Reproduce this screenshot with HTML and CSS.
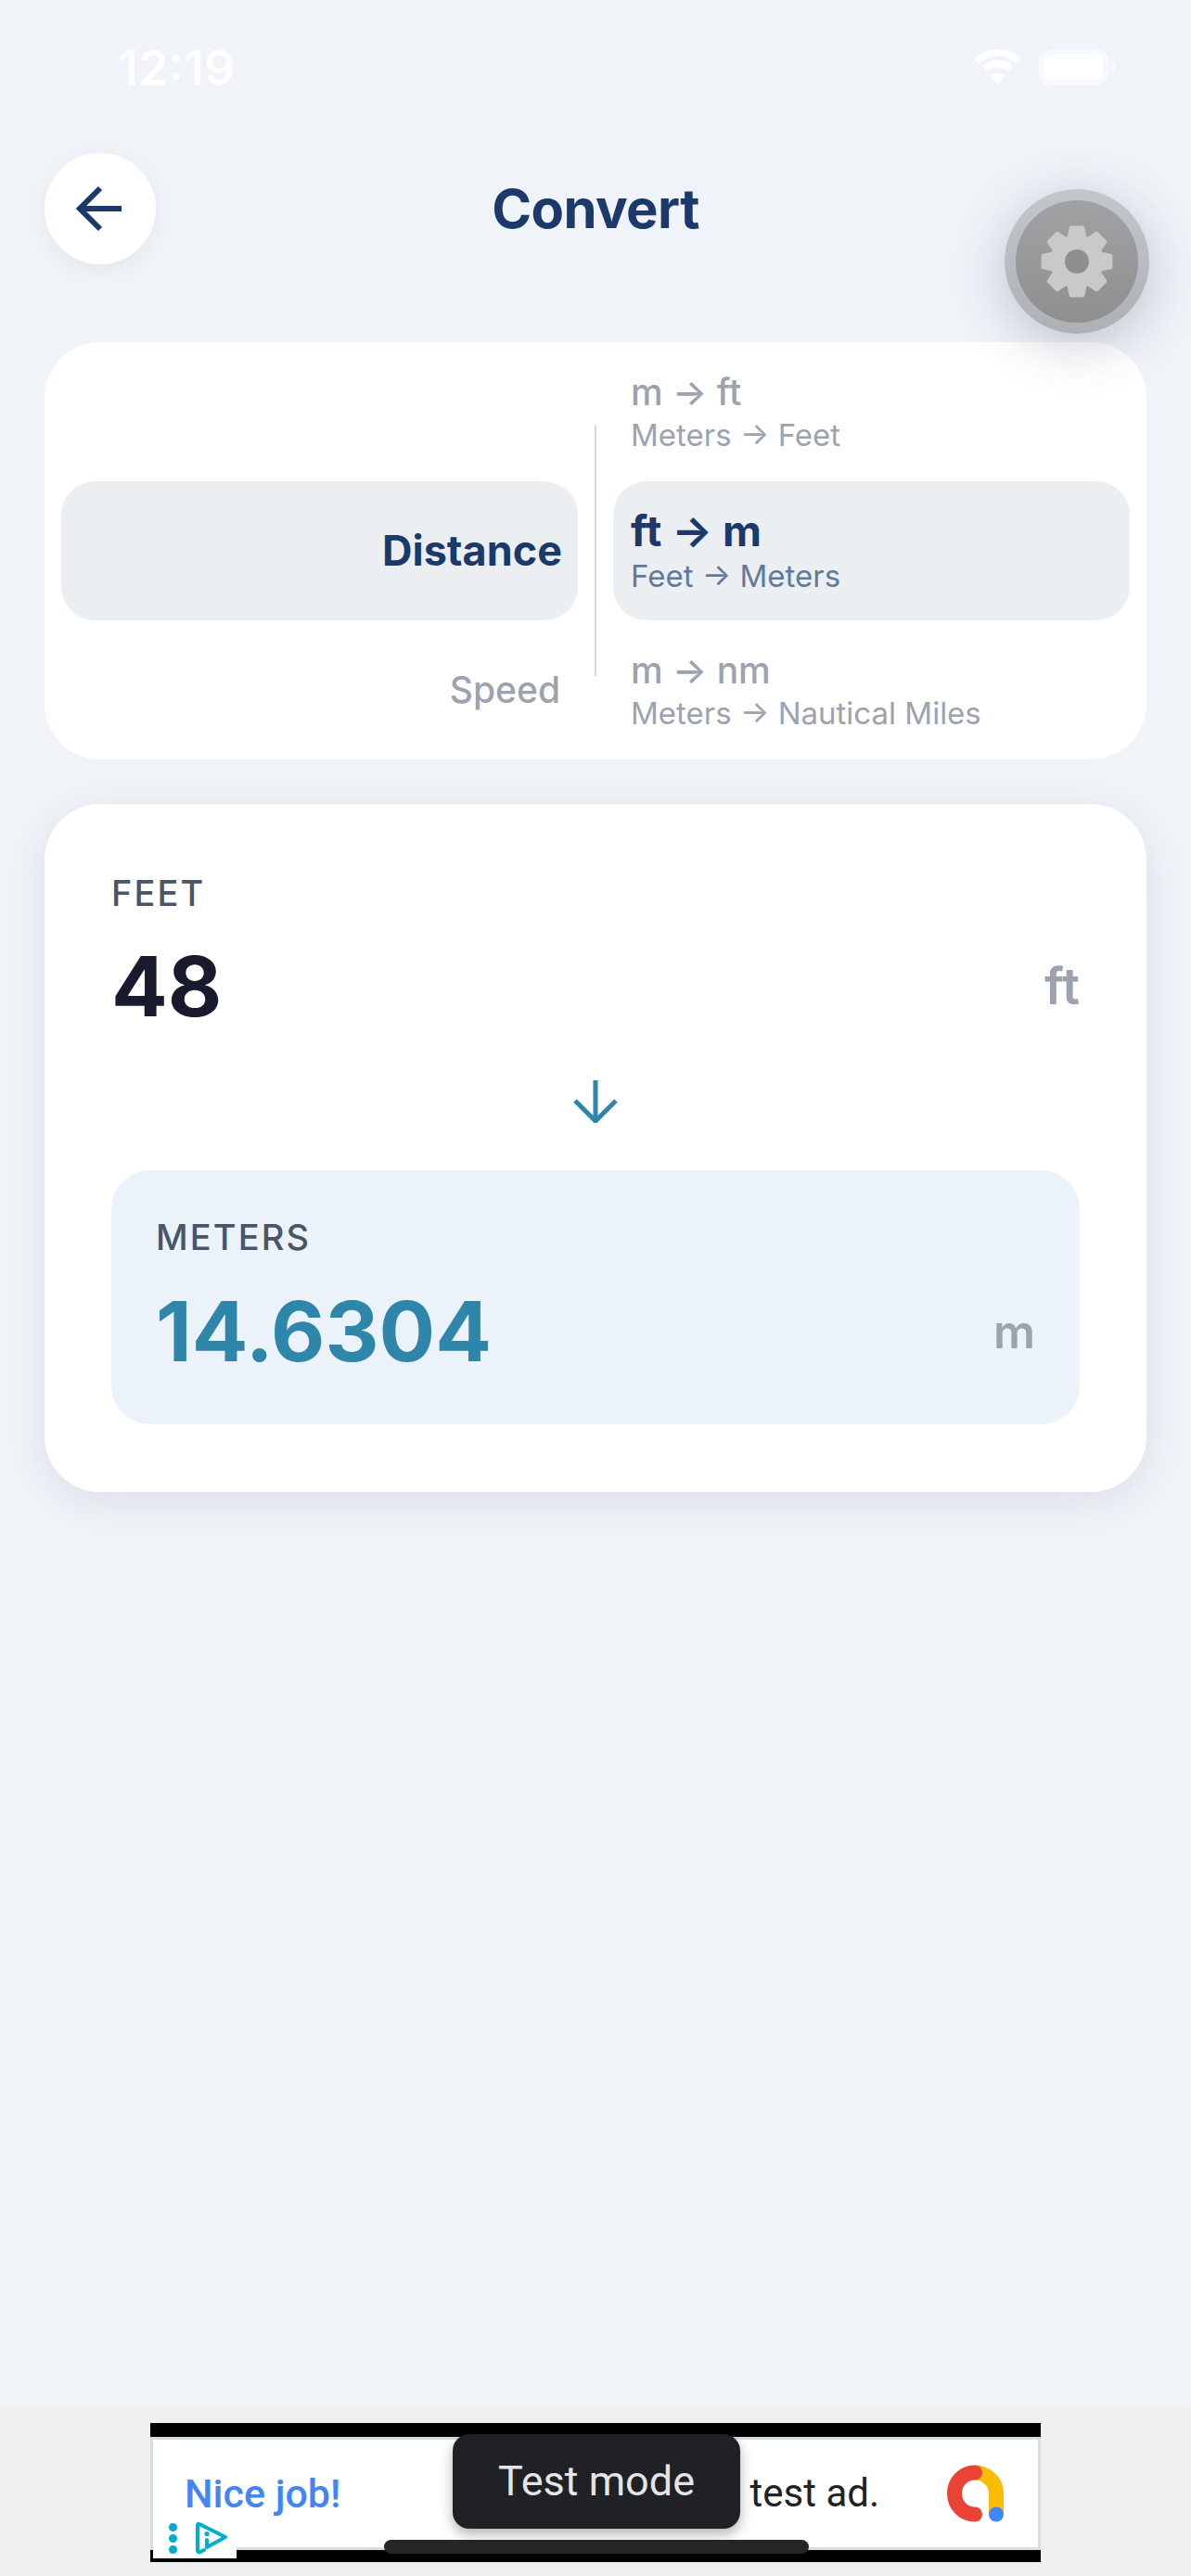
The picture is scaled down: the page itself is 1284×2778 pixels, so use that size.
FILE: index.html
```html
<!DOCTYPE html>
<html lang="en">
<head>
<meta charset="utf-8">
<title>Convert</title>
<link rel="stylesheet" href="styles.css">
</head>
<body>
<div class="screen">
  <div class="status">
    <span class="clock">12:19</span>
    <div class="status-icons">
      <div class="signal"><i></i><i></i><i></i><i></i></div>
      <svg class="wifi" viewBox="0 0 51 38" width="51" height="38"><path d="M25.5 0C35 0 44 4 51 10.5L46 16C40 10.5 33 7.5 25.5 7.5C18 7.5 11 10.5 5 16L0 10.5C7 4 16 0 25.5 0Z"/><path d="M25.5 11.5C32 11.5 38 14 42 18L37.5 24C34.5 21 30 20 25.5 20C21 20 16.5 21 13.5 24L9 18C13 14 19 11.5 25.5 11.5Z"/><path d="M25.5 26C29 26 31 27 33.5 29L25.5 38L17.5 29C20 27 22 26 25.5 26Z"/></svg>
      <div class="battery"><div class="battery-fill"></div></div>
      <div class="battery-nub"></div>
    </div>
  </div>

  <header class="header">
    <button class="back" aria-label="Back">
      <svg viewBox="0 0 52 52" width="52" height="52"><path d="M49 26H5M26 4L4 26L26 48" class="back-stroke"/></svg>
    </button>
    <h1 class="title">Convert</h1>
  </header>

  <section class="card picker">
    <div class="wheel">
      <div class="row row-cat"></div>
      <div class="row row-cat row-on"><span class="cat-on">Distance</span></div>
      <div class="row row-cat"><span class="cat-off">Speed</span></div>
    </div>
    <div class="divider"></div>
    <div class="wheel">
      <div class="row"><span class="unit-main">m → ft</span><span class="unit-sub">Meters → Feet</span></div>
      <div class="row row-on"><span class="unit-main unit-main-on">ft → m</span><span class="unit-sub unit-sub-on">Feet → Meters</span></div>
      <div class="row"><span class="unit-main">m → nm</span><span class="unit-sub">Meters → Nautical Miles</span></div>
    </div>
  </section>

  <section class="card convert">
    <div class="label">FEET</div>
    <div class="value-row">
      <span class="value">48</span>
      <span class="suffix">ft</span>
    </div>
    <div class="arrow-down">
      <svg viewBox="0 0 50 46" width="50" height="46"><path d="M25 0V44M3 22L25 44L47 22" class="arrow-stroke"/></svg>
    </div>
    <div class="result">
      <div class="label">METERS</div>
      <div class="value-row result-row">
        <span class="value value-result">14.6304</span>
        <span class="suffix suffix-result">m</span>
      </div>
    </div>
  </section>

  <div class="ad-band">
    <div class="ad-frame">
      <div class="ad-creative">
        <span class="ad-blue">Nice job!</span>
        <span class="ad-text">test ad.</span>
        <svg class="ad-logo" viewBox="0 0 62 62" width="62" height="62">
          <path d="M30 8.5C42 8.5 53 18 53 31V53" class="logo-yellow"/>
          <path d="M30 8.5C18 8.5 8 18 8 31C8 44 18 53.5 30 53.5" class="logo-red"/>
          <circle cx="53" cy="53.5" r="8" class="logo-blue"/>
        </svg>
      </div>
      <div class="ad-choice">
        <div class="ad-dots"><i></i><i></i><i></i></div>
        <svg viewBox="0 0 36 36" width="36" height="36"><path d="M13 28L33 17L5 3Q3 2 3 4V31Q3 34 6 33L10 31M13 20V28" class="choice-stroke"/><circle cx="13" cy="13.5" r="2.6" class="choice-dot"/></svg>
      </div>
    </div>
  </div>

  <button class="fab" aria-label="Settings">
    <span class="fab-inner">
      <svg viewBox="-42 -42 84 84" width="84" height="84">
        <defs><path id="tooth" d="M-8.2-26.8L-6.4-36.4H6.4L8.2-26.8Z" class="gear-tooth"/></defs>
        <use href="#tooth"/>
        <use href="#tooth" transform="rotate(45)"/>
        <use href="#tooth" transform="rotate(90)"/>
        <use href="#tooth" transform="rotate(135)"/>
        <use href="#tooth" transform="rotate(180)"/>
        <use href="#tooth" transform="rotate(225)"/>
        <use href="#tooth" transform="rotate(270)"/>
        <use href="#tooth" transform="rotate(315)"/>
        <circle r="29" class="gear-body"/>
        <circle r="13" class="gear-hole"/>
      </svg>
    </span>
  </button>

  <div class="toast">Test mode</div>
  <div class="home-bar"></div>
</div>
</body>
</html>
```
FILE: styles.css
```css
* { box-sizing: border-box; }
html, body { margin: 0; padding: 0; }
body { font-family: Inter, "Liberation Sans", sans-serif; }
.screen {
  position: relative;
  width: 1284px;
  height: 2778px;
  overflow: hidden;
  background: #f0f3f8;
  display: flex;
  flex-direction: column;
}

/* status bar */
.status {
  height: 165px;
  padding: 44px 0 0 127px;
  display: flex;
  justify-content: space-between;
  align-items: flex-start;
  flex-shrink: 0;
}
.clock {
  font-size: 52px;
  line-height: 60px;
  font-weight: 600;
  color: #fff;
  opacity: .95;
}
.status-icons {
  display: flex;
  align-items: flex-start;
  padding: 9px 82px 0 0;
}
.signal {
  display: flex;
  gap: 6px;
  margin: 28px 19px 0 0;
}
.signal i {
  display: block;
  width: 10px;
  height: 10px;
  border-radius: 50%;
  background: #f3f6f9;
}
.wifi { fill: #fff; margin-right: 19px; }
.battery {
  width: 75px;
  height: 39px;
  border: 6px solid #f7f9fc;
  border-radius: 13px;
}
.battery-fill {
  height: 100%;
  background: #fff;
  border-radius: 6px;
}
.battery-nub {
  width: 4px;
  height: 12px;
  margin: 13px 0 0 3px;
  border-radius: 0 6px 6px 0;
  background: #f7f9fc;
}

/* header */
.header {
  position: relative;
  height: 120px;
  flex-shrink: 0;
  padding: 0 48px;
  display: flex;
  align-items: center;
}
.back {
  width: 120px;
  height: 120px;
  border-radius: 50%;
  border: 0;
  padding: 0;
  background: #fff;
  box-shadow: 0 6px 24px rgba(0, 0, 0, .05);
  display: flex;
  align-items: center;
  justify-content: center;
}
.back-stroke {
  fill: none;
  stroke: #1b3a6b;
  stroke-width: 6;
}
.title {
  flex: 1;
  margin: 0 120px 0 0;
  text-align: center;
  font-size: 58px;
  line-height: 72px;
  font-weight: 700;
  color: #1b3a6b;
  letter-spacing: -0.6px;
}

/* cards */
.card {
  margin: 0 48px;
  background: #fff;
  border-radius: 60px;
  flex-shrink: 0;
}
.picker {
  margin-top: 84px;
  height: 450px;
  padding: 0 18px;
  display: grid;
  grid-template-columns: 1fr 2px 1fr;
  column-gap: 18px;
  align-items: center;
}
.wheel { display: flex; flex-direction: column; }
.row {
  height: 150px;
  padding: 0 18px 0 19px;
  border-radius: 36px;
  display: flex;
  flex-direction: column;
  justify-content: center;
}
.row-cat { align-items: flex-end; padding-right: 17px; }
.row-on { background: #eceff2; }
.divider { height: 270px; background: #d4d7dc; }
.cat-on { font-size: 45px; line-height: 54px; font-weight: 700; color: #1b3a6b; }
.cat-off { margin-right: 2px; font-size: 39px; line-height: 48px; font-weight: 500; color: #9ca3af; }
.unit-main { font-size: 39px; line-height: 48px; font-weight: 500; color: #9ca3af; }
.unit-main-on { margin-top: -2px; font-size: 46px; line-height: 54px; font-weight: 700; color: #1b3a6b; }
.unit-sub { margin-top: 2px; font-size: 33px; line-height: 40px; font-weight: 400; color: #9ca3af; }
.unit-sub-on { color: #64789b; }

.convert {
  margin-top: 48px;
  height: 742px;
  padding: 72px 72px 0;
  box-shadow: 0 10px 44px rgba(20, 40, 70, .09);
}
.label {
  font-size: 38px;
  line-height: 48px;
  font-weight: 500;
  letter-spacing: 2.1px;
  color: #4a5568;
}
.value-row {
  display: flex;
  align-items: center;
  justify-content: space-between;
  margin-top: 22px;
}
.value {
  font-size: 90px;
  line-height: 110px;
  font-weight: 700;
  color: #1a1a2e;
}
.value-result { color: #2e86ab; }
.suffix {
  font-size: 54px;
  line-height: 60px;
  font-weight: 600;
  color: #9ca3af;
}
.suffix-result { font-size: 50px; }
.arrow-down {
  display: flex;
  justify-content: center;
  margin-top: 46px;
  height: 97px;
}
.arrow-stroke { fill: none; stroke: #2e86ab; stroke-width: 5; }
.result {
  height: 274px;
  padding: 48px 48px 0;
  border-radius: 42px;
  background: #ebf2fa;
}
.result-row { margin-top: 23px; }

/* ad */
.ad-band {
  margin-top: auto;
  height: 180px;
  padding: 15px 0 0 162px;
  background: #f0f0f0;
  flex-shrink: 0;
}
.ad-frame {
  position: relative;
  width: 960px;
  height: 150px;
  padding: 15px 0 13px;
  background: #000;
}
.ad-creative {
  height: 122px;
  padding: 0 36px 0 34px;
  background: #fff;
  border: 3px solid #d5dfe3;
  display: flex;
  align-items: center;
  font-family: Roboto, sans-serif;
  white-space: nowrap;
}
.ad-blue { color: #4285f4; font-size: 43px; font-weight: 500; line-height: 50px; }
.ad-text {
  margin: 0 73px 0 auto;
  font-size: 42px;
  line-height: 50px;
  color: #202124;
}
.ad-logo { flex-shrink: 0; }
.logo-yellow { fill: none; stroke: #fbbc04; stroke-width: 16; }
.logo-red { fill: none; stroke: #ea4335; stroke-width: 16; stroke-linecap: round; }
.logo-blue { fill: #4285f4; }
.ad-choice {
  position: absolute;
  left: 3px;
  bottom: 4px;
  width: 90px;
  height: 44px;
  padding: 4px 0 0 17px;
  background: #fff;
  display: flex;
  gap: 19px;
}
.ad-dots { display: flex; flex-direction: column; gap: 3px; padding-top: 2px; }
.ad-dots i { display: block; width: 9px; height: 9px; border-radius: 50%; background: #00aecd; }
.choice-stroke { fill: none; stroke: #00aecd; stroke-width: 4; stroke-linejoin: round; stroke-linecap: round; }
.choice-dot { fill: #00aecd; }

/* overlays */
.fab {
  position: absolute;
  left: 1083px;
  top: 204px;
  width: 156px;
  height: 156px;
  padding: 12px;
  border: 0;
  border-radius: 50%;
  background: linear-gradient(#c3c6ca, #adb0b4);
  box-shadow: 0 12px 56px rgba(60, 70, 85, .28);
}
.fab-inner {
  display: flex;
  align-items: center;
  justify-content: center;
  width: 132px;
  height: 132px;
  border-radius: 50%;
  background: linear-gradient(#a1a2a4, #8f8f8f);
}
.gear-tooth { fill: #c9c9c9; stroke: #c9c9c9; stroke-width: 4; stroke-linejoin: round; }
.gear-body { fill: #c9c9c9; }
.gear-hole { fill: #8f8f8f; }

.toast {
  position: absolute;
  left: 488px;
  top: 2625px;
  width: 310px;
  height: 102px;
  border-radius: 18px;
  background: #202124;
  box-shadow: 0 6px 14px rgba(0, 0, 0, .3);
  color: #e4e5e8;
  font-family: Roboto, sans-serif;
  font-size: 45px;
  line-height: 102px;
  text-align: center;
}
.home-bar {
  position: absolute;
  left: 414px;
  top: 2739px;
  width: 458px;
  height: 15px;
  border-radius: 8px;
  background: #262626;
}
```
